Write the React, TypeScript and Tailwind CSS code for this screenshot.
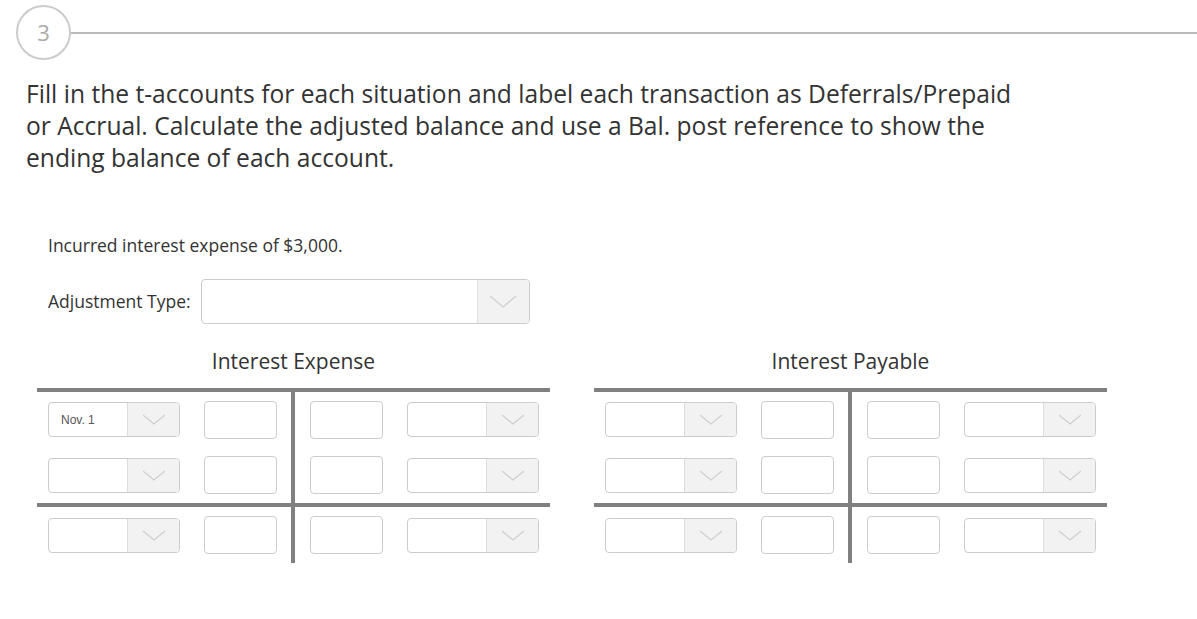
import type { ReactNode } from "react";

const FONT = { fontFamily: '"Open Sans", "Liberation Sans", sans-serif' };

function Chevron({ w = 24, h = 11 }: { w?: number; h?: number }) {
  return (
    <svg width={w} height={h} viewBox={`0 0 ${w} ${h}`} fill="none">
      <path
        d={`M1 1 L${w / 2} ${h - 1} L${w - 1} 1`}
        stroke="#cfcfcf"
        strokeWidth="1.3"
      />
    </svg>
  );
}

function Select({ value, small = true }: { value?: string; small?: boolean }) {
  return (
    <div
      className={[
        "flex shrink-0 overflow-hidden rounded-[4px] border border-[#cccccc] bg-white",
        small ? "h-[35px] w-[132px]" : "h-[45px] w-[329px]",
      ].join(" ")}
    >
      <div className="flex flex-1 items-center pl-[12px] text-[12px] text-[#555]" style={{ fontFamily: '"Liberation Sans", Arial, sans-serif' }}>
        {value}
      </div>
      <div className="flex w-[52px] items-center justify-center border-l border-[#dddddd] bg-[#f2f2f2]">
        {small ? <Chevron w={24} h={11} /> : <Chevron w={28} h={13} />}
      </div>
    </div>
  );
}

function Input() {
  return <div className="h-[38px] w-[73px] shrink-0 rounded-[4px] border border-[#cccccc] bg-white" />;
}

function Row({ children, h }: { children: ReactNode; h: string }) {
  return <div className={`flex items-center justify-between ${h}`}>{children}</div>;
}

function TAccount({ title, firstDate }: { title: string; firstDate?: string }) {
  const left = (date: string | undefined, h: string) => (
    <Row h={h}>
      <Select value={date} />
      <Input />
    </Row>
  );
  const right = (h: string) => (
    <Row h={h}>
      <Input />
      <Select />
    </Row>
  );

  return (
    <div className="w-[513px]">
      <h3 className="text-center text-[21px] leading-[28px] text-[#333]">{title}</h3>
      <div className="mt-[13px] h-[4px] bg-[#808080]" />

      {/* Entries */}
      <div className="flex">
        <div className="w-[254px] pl-[11px] pr-[14px]">
          {left(firstDate, "h-[55px]")}
          {left(undefined, "h-[56px]")}
        </div>
        <div className="w-[4px] bg-[#808080]" />
        <div className="flex-1 pl-[15px] pr-[11px]">
          {right("h-[55px]")}
          {right("h-[56px]")}
        </div>
      </div>

      <div className="h-[4px] bg-[#808080]" />

      {/* Balance */}
      <div className="flex">
        <div className="w-[254px] pl-[11px] pr-[14px]">{left(undefined, "h-[56px]")}</div>
        <div className="w-[4px] bg-[#808080]" />
        <div className="flex-1 pl-[15px] pr-[11px]">{right("h-[56px]")}</div>
      </div>
    </div>
  );
}

export default function App() {
  return (
    <div className="min-h-[619px] w-[1197px] bg-white text-[#333]" style={FONT}>
      {/* Step header */}
      <div className="flex items-center pl-[16px] pt-[5px]">
        <div className="flex h-[55px] w-[55px] shrink-0 items-center justify-center rounded-full border-2 border-[#cccccc] text-[22px] text-[#aaaaaa]">
          3
        </div>
        <div className="h-[2px] flex-1 bg-[#bbbbbb]" />
      </div>

      <p className="mt-[18px] px-[26px] text-[24.6px] leading-[32px] text-[#333]">
        <span className="block whitespace-nowrap">
          Fill in the t-accounts for each situation and label each transaction as Deferrals/Prepaid
        </span>
        <span className="block whitespace-nowrap">
          or Accrual. Calculate the adjusted balance and use a Bal. post reference to show the
        </span>
        <span className="block whitespace-nowrap">ending balance of each account.</span>
      </p>

      <div className="px-[48px]">
        <p className="mt-[59px] text-[17.5px] leading-[24px]">Incurred interest expense of $3,000.</p>

        <div className="mt-[22px] flex items-center gap-[10px]">
          <span className="text-[17.5px]">Adjustment Type:</span>
          <Select small={false} />
        </div>
      </div>

      <div className="mt-[23px] flex gap-[44px] pl-[37px]">
        <TAccount title="Interest Expense" firstDate="Nov. 1" />
        <TAccount title="Interest Payable" />
      </div>
    </div>
  );
}
